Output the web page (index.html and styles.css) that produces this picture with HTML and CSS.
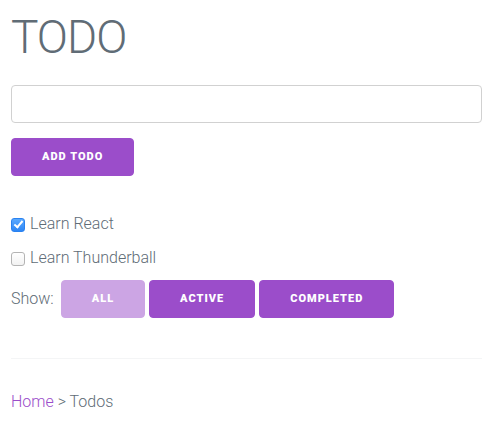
FILE: index.html
```
<!DOCTYPE html>
<html>
<head>
<meta charset="utf-8">
<link rel="stylesheet" href="styles.css">
</head>
<body>
<div class="page">
  <h1 class="title">TODO</h1>
  <form class="add-form">
    <input class="text-input" type="text">
    <button class="btn" type="button">Add Todo</button>
  </form>
  <ul class="todo-list">
    <li class="todo-item"><input class="todo-check" type="checkbox" checked><span class="todo-text">Learn React</span></li>
    <li class="todo-item"><input class="todo-check" type="checkbox"><span class="todo-text">Learn Thunderball</span></li>
  </ul>
  <div class="filters">
    <span class="show-label">Show:</span>
    <button class="btn btn-disabled" type="button">All</button>
    <button class="btn" type="button">Active</button>
    <button class="btn" type="button">Completed</button>
  </div>
  <hr class="divider">
  <div class="breadcrumb"><a class="crumb-link" href="#">Home</a> &gt; Todos</div>
</div>
</body>
</html>
```
FILE: styles.css
```
html, body {
  margin: 0;
  padding: 0;
  background: #fff;
}
body {
  font-family: Roboto, "Liberation Sans", sans-serif;
  font-weight: 300;
  font-size: 16px;
  line-height: 1.6;
  color: #606c76;
}
.page {
  padding: 10px 16px 0 11px;
}
.title {
  margin: 0 0 20px;
  font-size: 46px;
  font-weight: 300;
  line-height: 1.2;
  letter-spacing: -1px;
}
.add-form {
  margin: 0;
  display: flex;
  flex-direction: column;
  align-items: flex-start;
}
.text-input {
  display: block;
  box-sizing: border-box;
  width: 100%;
  height: 38px;
  margin: 0 0 15px;
  padding: 6px 10px;
  border: 1px solid #d1d1d1;
  border-radius: 4px;
  background: transparent;
  font: inherit;
  outline: none;
}
.btn {
  display: inline-block;
  box-sizing: border-box;
  height: 38px;
  padding: 0 30px;
  margin: 0;
  border: 1px solid #9b4dca;
  border-radius: 4px;
  background: #9b4dca;
  color: #fff;
  font-family: Roboto, "Liberation Sans", sans-serif;
  font-size: 11px;
  font-weight: 900;
  letter-spacing: 1px;
  line-height: 36px;
  text-transform: uppercase;
  white-space: nowrap;
  vertical-align: top;
  cursor: pointer;
}
.btn-disabled {
  opacity: 0.5;
}
.todo-list {
  list-style: none;
  margin: 36px 0 0;
  padding: 0;
}
.todo-item {
  display: flex;
  align-items: center;
  height: 24px;
  margin: 0 0 10px;
  line-height: 24px;
}
.todo-check {
  appearance: none;
  -webkit-appearance: none;
  box-sizing: border-box;
  flex: none;
  width: 14px;
  height: 14px;
  margin: 1px 5px 0 0;
  border: 1px solid #b4b4b4;
  border-radius: 3px;
  background: linear-gradient(#ffffff, #f2f2f2);
  display: inline-flex;
  align-items: center;
  justify-content: center;
}
.todo-check:checked {
  border-color: #2a82f0;
  background: linear-gradient(#5aa9ff, #2d86f5);
}
.todo-check:checked::after {
  content: "";
  width: 3px;
  height: 7px;
  margin-top: -2px;
  border: solid #fff;
  border-width: 0 2px 2px 0;
  transform: rotate(40deg);
}
.filters {
  margin-top: 2px;
  display: flex;
  align-items: center;
  gap: 4px;
}
.show-label {
  margin-right: 3px;
}
.divider {
  margin: 40px 0 0;
  border: 0;
  border-top: 1px solid #f4f5f6;
  height: 0;
}
.breadcrumb {
  margin-top: 30px;
  line-height: 25.6px;
}
.crumb-link {
  color: #9b4dca;
  text-decoration: none;
}
```
